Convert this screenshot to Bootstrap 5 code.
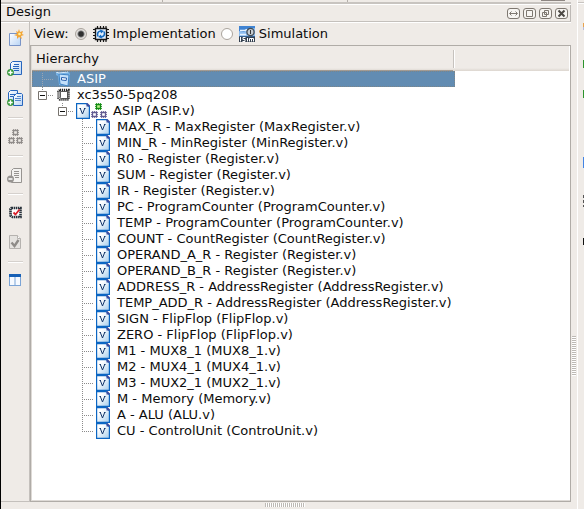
<!DOCTYPE html>
<html lang="en">
<head>
<meta charset="utf-8">
<title>Design</title>
<link href="https://cdn.jsdelivr.net/npm/bootstrap@5.3.0/dist/css/bootstrap.min.css" rel="stylesheet">
<style>
body{width:584px;height:509px;background:#efebe7;color:#0c0c0c;font:13px/16px "DejaVu Sans",sans-serif}
svg{display:block;flex:none}
.window{width:584px;height:509px;border-left:1px solid #000}
.top-edge{height:5px;border-bottom:1px solid #fff;background:linear-gradient(#efebe7 2px,#c8c4c0 2px)}
.top-edge i{width:1px;height:2px;background:#b5b0ab;margin-left:161px}
.top-edge i+i{margin-left:184px}
.top-edge b{width:24px;height:1px;background:#8d8682;margin-left:193px}
.dock{width:570px}
.title-bar{height:17px;border-right:1px solid #bdb9b5;border-bottom:1px solid #c4c0bc;padding-left:5px;padding-right:1px;box-shadow:0 1px #fff}
.title-bar span{margin-top:-2px}
.title-bar svg{margin-top:2px}
.tools{width:28px;height:480px;padding-top:7px;border-bottom:1px solid #c4c0bc}
.tool{height:18px;width:18px;margin-left:5px}
.rule{width:15px;height:2px;background:#d5d1cd;border-bottom:1px solid #fff;margin-left:7px;flex:none}
.main-col{width:542px;border-left:1px solid #c4c0bc}
.view-row{height:23px;padding-left:4px;padding-top:1px}
.radio{width:12px;height:12px;border:1px solid #aaa49d;border-radius:50%;background:#fff;flex:none}
.radio.on{margin-right:-1px;margin-left:6px!important;background:radial-gradient(circle,#303030 0 2.2px,#777 3px,#e2dfdc 4px)}
.tree-frame{width:541px;height:457px;border:1px solid #b0aca7;background:#fff;box-shadow:inset 1px -1px #dedad6}
.tree-head{height:25px;background:linear-gradient(#efebe7 22px,#dcd6cf);margin:0 1px 0 1px}
.head-cell{width:421px;height:25px;padding:5px 0 0 4px;border-bottom:1px solid #a39b93}
.head-mark{width:2px;height:18px;background:#c6c2be;border-right:1px solid #fff;margin-top:4px}
.tree{padding-left:1px}
.node{height:16px;white-space:nowrap}
.node.chosen{width:423px;background:#628cb2;color:#fff;outline:1px dotted #7c8588;outline-offset:-1px}
.grip-v{width:4px;height:40px;background:repeating-linear-gradient(#bdb9b4 0 1px,#fff 1px 2px);margin-left:1px}
.grip-h{width:40px;height:4px;background:repeating-linear-gradient(90deg,#bdb9b4 0 1px,#fff 1px 2px);margin:1px 2px 0 0}
.side{width:13px}
.gutter{width:7px;border-right:1px solid #fff;padding-top:336px}
</style>
<script src="https://cdn.jsdelivr.net/npm/bootstrap@5.3.0/dist/js/bootstrap.bundle.min.js"></script>
</head>
<body class="overflow-hidden">
<svg width="0" height="0" class="position-absolute">
<defs>
<linearGradient id="paper" x1="0" y1="0" x2="1" y2="1"><stop offset=".3" stop-color="#fff"/><stop offset="1" stop-color="#a5cdec"/></linearGradient>
<linearGradient id="sheet" x1="0" y1="0" x2="1" y2="1"><stop stop-color="#fff"/><stop offset="1" stop-color="#b8d4f5"/></linearGradient>
<symbol id="v" viewBox="0 0 14 16"><path d="M.6.6h9.7l3.1 3.2v11.6H.6z" fill="url(#paper)" stroke="#0b66c3" stroke-width="1.2"/><path d="M10.500 0v3.500H14V2.500L11.500 0z" fill="#3a4da0"/><path d="M4.300 5.500 6.500 11 8.700 5.500M3.500 5.500h1.500M8 5.500h1.500" fill="none" stroke="#15386c" stroke-width="1"/></symbol>
<symbol id="leaf" viewBox="0 0 78 16"><path d="M50.5 0v16M52 8.5h9" stroke="#8b8b8b" stroke-dasharray="1 1"/><use href="#v" x="64" width="14" height="16"/></symbol>
<symbol id="last" viewBox="0 0 78 16"><path d="M50.5 0v8M50 8.5h11" stroke="#8b8b8b" stroke-dasharray="1 1"/><use href="#v" x="64" width="14" height="16"/></symbol>
<symbol id="plus" viewBox="0 0 8 8"><circle cx="4" cy="4" r="3.6" fill="#3aa03a" stroke="#1d7a24" stroke-width=".6"/><path d="M4 1.5v5M1.5 4h5" stroke="#fff" stroke-width="1.5"/></symbol>
<symbol id="block" viewBox="0 0 7 7"><path d="M1.5 1.5h4v4h-4z" fill="none" stroke="currentColor" stroke-width="1.3"/><path d="M1.5 0v7M3.5 0v1M3.5 6v1M5.5 0v7M0 1.5h7M0 3.5h1M6 3.5h1M0 5.5h7" stroke="currentColor" stroke-width=".8"/></symbol>
</defs>
</svg>

<div class="window d-flex">
<div class="dock d-flex flex-column">
  <div class="top-edge d-flex"><i></i><i></i><b></b></div>
  <header class="title-bar d-flex align-items-center justify-content-between">
    <span>Design</span>
    <svg width="62" height="14" fill="none" stroke="#7e7871">
      <g fill="#f7f5f2"><rect x=".5" y="1.5" width="12" height="10" rx="2.5"/><rect x="16.5" y="1.5" width="12" height="10" rx="2.5"/><rect x="32.5" y="1.5" width="12" height="10" rx="2.5"/><rect x="48.5" y="1.5" width="12" height="10" rx="2.5"/></g>
      <path d="M3 6.5h7M4.500 4.500l-2 2 2 2M8.500 4.500l2 2-2 2M19.500 3.500h6v6h-6zM37.500 3.500h4v4h-4zM35.500 5.500h4v4h-4z"/>
      <path d="m51.500 3.500 6 6m0-6-6 6" stroke="#4c4844" stroke-width="2"/>
    </svg>
  </header>
  <div class="d-flex">
    <nav class="tools d-flex flex-column">
      <svg class="tool" viewBox="0 0 18 18"><path d="M3.500 4.500h11v12h-11z" fill="url(#sheet)" stroke="#7994c7"/><path d="m13 0 1 3 3-1-1 3 2 1-3 1 1 3-3-2-2 2v-3l-3-1 3-1-1-3 2 1z" fill="#f3a536"/><circle cx="13.500" cy="5" r="1.300" fill="#fff3a0"/></svg>
      <svg class="tool" style="margin-top:13px" viewBox="0 0 18 18"><path d="M6.500 1.500h9v13h-11v-11z" fill="url(#sheet)" stroke="#2866bd"/><path d="M8 4.500h5M7 6.500h6M7 8.500h6M8 10.500h5" stroke="#2866bd"/><use href="#plus" x="1" y="9" width="7" height="7"/></svg>
      <svg class="tool" style="margin-top:12px" viewBox="0 0 18 18"><path d="M4.500.5h7v11h-9v-9z" fill="url(#sheet)" stroke="#2866bd"/><path d="M4 4.500h5M4 6.500h5" stroke="#2866bd"/><path d="M10.500 3.500h5l1 1v11h-9v-9z" fill="url(#sheet)" stroke="#2866bd"/><path d="M11 6.500h4M9 8.500h6M9 10.500h6" stroke="#5588cc"/><use href="#plus" x="1" y="9" width="7" height="7"/></svg>
      <div class="rule" style="margin-top:9px"></div>
      <svg class="tool" style="margin-top:9px;color:#8f8c89" viewBox="0 0 18 18"><use href="#block" x="6" y="1" width="7" height="7"/><use href="#block" x="2" y="9" width="7" height="7"/><use href="#block" x="10" y="9" width="7" height="7"/></svg>
      <div class="rule" style="margin-top:9px"></div>
      <svg class="tool" style="margin-top:10px" viewBox="0 0 18 18"><path d="M7.500 1.500h8v14h-10v-12z" fill="#f4f3f1" stroke="#979491"/><path d="M8 4.500h5M8 6.500h5M8 8.500h5M9 10.500h4" stroke="#979491"/><circle cx="4.500" cy="12" r="3.500" fill="#979491"/><path d="M2.500 12h4" stroke="#fff" stroke-width="1.500"/></svg>
      <div class="rule" style="margin-top:8px"></div>
      <svg class="tool" style="margin-top:9px" viewBox="0 0 18 18"><path d="M5 3h10v11H6l-2-2V4z" fill="#fff"/><path d="M5.500 4h9v9h-8L4.500 11.500V5z" fill="none" stroke="#29323b" stroke-width="2.600" stroke-dasharray="1.500 .6"/><path d="m7.500 8.500 2 2 4-5" fill="none" stroke="#d9202b" stroke-width="1.800"/></svg>
      <svg class="tool" style="margin-top:11px" viewBox="0 0 18 18"><path d="M3.500 2.500h8l3 3v10h-11z" fill="#e5e3e0" stroke="#b5b2af"/><path d="M11.500 2.500v3h3" fill="#fff" stroke="#b5b2af"/><path d="m5.500 9.500 3 3.500 4-6" fill="none" stroke="#8e8b88" stroke-width="2.400"/></svg>
      <div class="rule" style="margin-top:10px"></div>
      <svg class="tool" style="margin-top:8px" viewBox="0 0 18 18"><path d="M3 4h12v11H3z" fill="#7ba4d6"/><path d="M3 3h12v3H3z" fill="#1760b5"/><path d="M4 6h4.500v8H4zM9.500 6H14v8H9.500z" fill="#f6faff"/></svg>
    </nav>
    <main class="main-col">
      <div class="view-row d-flex align-items-center">
        <span>View:</span>
        <span class="radio on"></span>
        <svg width="16" height="16" style="margin-left:7px" viewBox="0 0 16 16"><path d="M4.500 0v16M7.500 0v16M10.500 0v16M13 0v16M0 3.500h16M0 6.500h16M0 9.500h16M0 12.500h16" stroke="#171717" stroke-width="1.200"/><path d="M2.500 2.500h11v11h-11z" fill="#e4f1ff" stroke="#171717" stroke-width="1.400"/><path d="M5 10.500C3.500 7 5.500 5 8 5M11 5.500c1.500 3.500-.5 5.500-3 5.500" fill="none" stroke="#156bc1" stroke-width="1.600"/><path d="M7 3.500 11 5 8 7.500zM9 12.500 5 11l3-2.500z" fill="#156bc1"/></svg>
        <span style="margin-left:4px">Implementation</span>
        <span class="radio" style="margin-left:5px"></span>
        <svg width="16" height="16" style="margin-left:6px" viewBox="0 0 16 16"><path d="M0 0h16v16H0z" fill="#3f83d2"/><path d="M0 10V5l5 1 4-3 7-1v8z" fill="#8dbdf0"/><path d="M1 4.500h5l2-1M1 8.500h6" stroke="#e6f3ff" stroke-width="1.500" fill="none"/><circle cx="11.500" cy="6" r="3.600" fill="#c5ccd2" stroke="#444b52" stroke-width="1.300"/><path d="M11.500 4v4" stroke="#333"/><path d="M0 10.500h16V16H0z" fill="#34404f"/><path d="M1.500 11v4.500M6.500 11.500H4v2h2v2H3.500M8.500 12v3.500M10.500 15.500v-3h4v3M12.500 12v3.500" fill="none" stroke="#fff"/></svg>
        <span style="margin-left:4px">Simulation</span>
      </div>
      <section class="tree-frame">
        <div class="tree-head d-flex"><div class="head-cell">Hierarchy</div><div class="head-mark"></div></div>
        <div class="tree">
          <div class="node chosen d-flex"><svg width="45" height="16"><path d="M10.500 0v16M12 8.500h9" stroke="#9aa6b2" stroke-dasharray="1 1"/><path d="m24 1 3 1 10-1 1 2-1 10-2 2-8-1-1-9-2-1z" fill="#77b2e5"/><path d="m27 3 10 1-1 11-8-2z" fill="#c3e0fa" stroke="#3f83c4"/><path d="m29.500 6.500 5 .5-.3 2.500-4.700-.5z" fill="#fff" stroke="#2860ad"/><path d="m24 1 3 1 9-1" fill="none" stroke="#d1e7fa"/></svg><span>ASIP</span></div>
          <div class="node d-flex"><svg width="45" height="16"><path d="M10.500 0v4M16 8.500h5" stroke="#8b8b8b" stroke-dasharray="1 1"/><path d="M6.500 4.500h8v8h-8z" fill="#fff" stroke="#77736e"/><path d="M8 8.500h5" stroke="#111"/><path d="M27 3h9v10h-7l-2-2z" fill="#fff"/><path d="M28 3h8.500v9.500H28L26.500 11V4.500z" fill="none" stroke="#272727" stroke-width="2.600" stroke-dasharray="1.200 .8"/><path d="M28.500 4.500h7v7h-6l-1-1z" fill="#fff" stroke="#333" stroke-width=".8"/></svg><span>xc3s50-5pq208</span></div>
          <div class="node d-flex"><svg width="81" height="16"><path d="M30.500 0v4M36 8.500h5" stroke="#8b8b8b" stroke-dasharray="1 1"/><path d="M26.500 4.500h8v8h-8z" fill="#fff" stroke="#77736e"/><path d="M28 8.500h5" stroke="#111"/><use href="#v" x="44" width="14" height="16"/><g color="#118c12"><path d="M64 1h5v5h-5z" fill="#bdf18c"/><use href="#block" x="63" width="7" height="7"/></g><g color="#625a91"><use href="#block" x="59" y="8" width="7" height="7"/><use href="#block" x="68" y="8" width="7" height="7"/></g></svg><span>ASIP (ASIP.v)</span></div>
          <div class="node d-flex"><svg width="85" height="16"><use href="#leaf" width="78" height="16"/></svg><span>MAX_R - MaxRegister (MaxRegister.v)</span></div>
          <div class="node d-flex"><svg width="85" height="16"><use href="#leaf" width="78" height="16"/></svg><span>MIN_R - MinRegister (MinRegister.v)</span></div>
          <div class="node d-flex"><svg width="85" height="16"><use href="#leaf" width="78" height="16"/></svg><span>R0 - Register (Register.v)</span></div>
          <div class="node d-flex"><svg width="85" height="16"><use href="#leaf" width="78" height="16"/></svg><span>SUM - Register (Register.v)</span></div>
          <div class="node d-flex"><svg width="85" height="16"><use href="#leaf" width="78" height="16"/></svg><span>IR - Register (Register.v)</span></div>
          <div class="node d-flex"><svg width="85" height="16"><use href="#leaf" width="78" height="16"/></svg><span>PC - ProgramCounter (ProgramCounter.v)</span></div>
          <div class="node d-flex"><svg width="85" height="16"><use href="#leaf" width="78" height="16"/></svg><span>TEMP - ProgramCounter (ProgramCounter.v)</span></div>
          <div class="node d-flex"><svg width="85" height="16"><use href="#leaf" width="78" height="16"/></svg><span>COUNT - CountRegister (CountRegister.v)</span></div>
          <div class="node d-flex"><svg width="85" height="16"><use href="#leaf" width="78" height="16"/></svg><span>OPERAND_A_R - Register (Register.v)</span></div>
          <div class="node d-flex"><svg width="85" height="16"><use href="#leaf" width="78" height="16"/></svg><span>OPERAND_B_R - Register (Register.v)</span></div>
          <div class="node d-flex"><svg width="85" height="16"><use href="#leaf" width="78" height="16"/></svg><span>ADDRESS_R - AddressRegister (AddressRegister.v)</span></div>
          <div class="node d-flex"><svg width="85" height="16"><use href="#leaf" width="78" height="16"/></svg><span>TEMP_ADD_R - AddressRegister (AddressRegister.v)</span></div>
          <div class="node d-flex"><svg width="85" height="16"><use href="#leaf" width="78" height="16"/></svg><span>SIGN - FlipFlop (FlipFlop.v)</span></div>
          <div class="node d-flex"><svg width="85" height="16"><use href="#leaf" width="78" height="16"/></svg><span>ZERO - FlipFlop (FlipFlop.v)</span></div>
          <div class="node d-flex"><svg width="85" height="16"><use href="#leaf" width="78" height="16"/></svg><span>M1 - MUX8_1 (MUX8_1.v)</span></div>
          <div class="node d-flex"><svg width="85" height="16"><use href="#leaf" width="78" height="16"/></svg><span>M2 - MUX4_1 (MUX4_1.v)</span></div>
          <div class="node d-flex"><svg width="85" height="16"><use href="#leaf" width="78" height="16"/></svg><span>M3 - MUX2_1 (MUX2_1.v)</span></div>
          <div class="node d-flex"><svg width="85" height="16"><use href="#leaf" width="78" height="16"/></svg><span>M - Memory (Memory.v)</span></div>
          <div class="node d-flex"><svg width="85" height="16"><use href="#leaf" width="78" height="16"/></svg><span>A - ALU (ALU.v)</span></div>
          <div class="node d-flex"><svg width="85" height="16"><use href="#last" width="78" height="16"/></svg><span>CU - ControlUnit (ControUnit.v)</span></div>
        </div>
      </section>
    </main>
  </div>
  <footer class="d-flex justify-content-center"><div class="grip-h"></div></footer>
</div>
<aside class="side d-flex">
  <div class="gutter"><div class="grip-v"></div></div>
  <svg width="6" height="509"><path d="M0 2.500h6" stroke="#c8c4c0"/><path d="M0 3.500h6" stroke="#fff"/><path d="M5.500 23v4" stroke="#e9a24a"/><path d="M5.500 27v3" stroke="#b8bcd8"/><path d="M5.500 60v8M5.500 90v8" stroke="#2c942c"/><path d="M5.500 157v11" stroke="#4384e4"/><path d="M5.500 195v12" stroke="#555" stroke-dasharray="3 2"/><path d="M5.500 238v7" stroke="#111"/></svg>
</aside>
</div>
</body>
</html>
